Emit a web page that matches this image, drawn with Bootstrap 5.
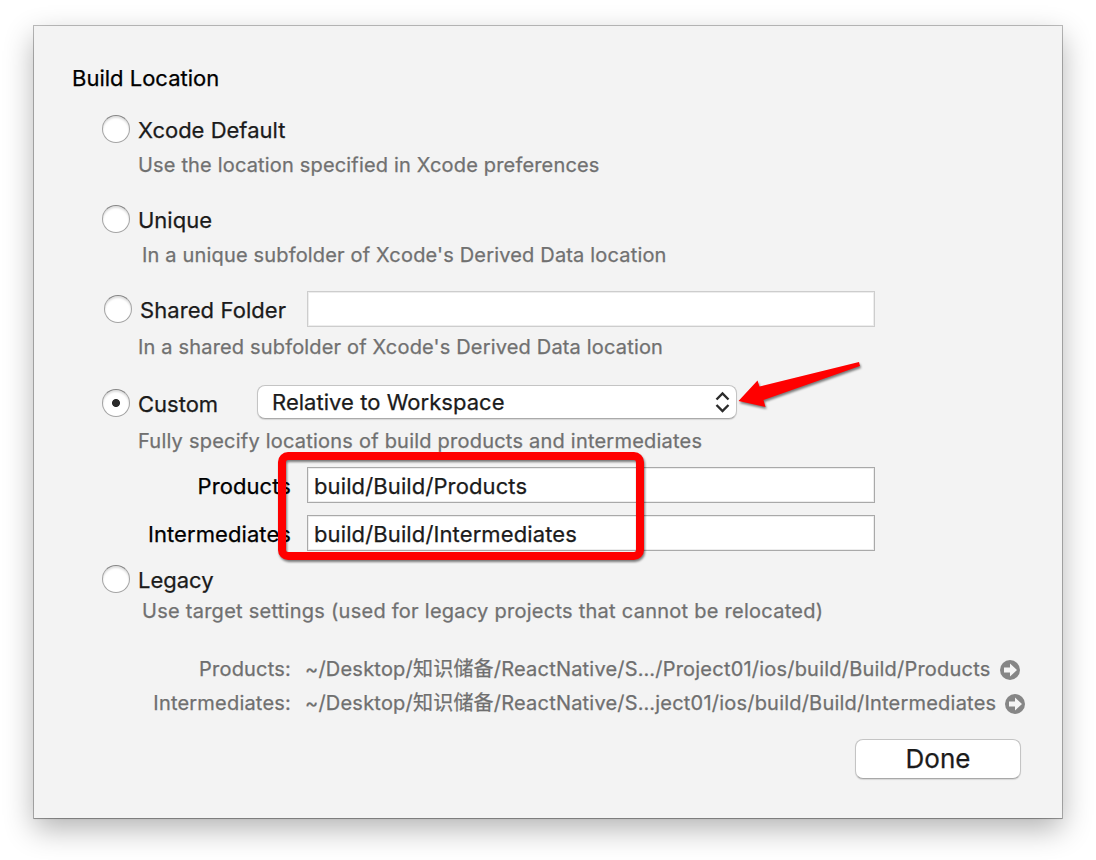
<!DOCTYPE html>
<html lang="en">
<head>
<meta charset="utf-8">
<meta name="viewport" content="width=device-width, initial-scale=1">
<title>Build Location</title>
<link href="https://cdn.jsdelivr.net/npm/bootstrap@5.3.0/dist/css/bootstrap.min.css" rel="stylesheet">
<style>
body{height:860px;padding:26px 0 0 34px;background:#fff;font-family:Inter,"Noto Sans CJK SC",sans-serif;font-size:22px;line-height:30px;color:#1b1b1b;overflow:hidden;white-space:nowrap;-webkit-text-stroke:.25px currentColor}
.sheet{width:1028px;height:792px;padding:35px 0 0 38px;background:#f3f3f3;box-shadow:0 0 0 1px rgba(0,0,0,.25),0 1px 1px rgba(0,0,0,.15),0 11px 28px rgba(0,0,0,.3)}
.heading{height:34px;margin-bottom:17px;font-size:22px;line-height:34px;color:#000}
.opt{height:34px;padding-left:30px}
.opt-label span{padding-top:2px}
.opt-tall{height:36px}
.gap-row{margin-top:22px}
.hint{height:30px;margin-top:4px;padding-left:66px;font-size:20px;letter-spacing:.17px;color:#707070}
.hint-in{padding-left:70px}
.dial{appearance:none;width:28px;height:28px;margin:0 8px 0 0;flex:none;border:1px solid #a4a4a4;border-top-color:#858585;border-radius:50%;background:#fff;box-shadow:inset 0 2px 2px rgba(0,0,0,.13)}
.dial:checked{background:radial-gradient(circle,#2b2b2b 3.6px,#fff 4.4px)}
.field{width:568px;height:36px;padding:1px 6px 0;border:1px solid #a9a9a9;background:#fff;box-shadow:inset 0 0 0 1px #ededed;color:#1b1b1b;letter-spacing:.12px;outline:0}
.field-off{border-color:#cdcdcd}
.picker{width:480px;height:34px;padding:0 6px 0 14px;border:1px solid #c4c4c4;border-bottom-color:#aaa;border-radius:8px;background:#fff;box-shadow:0 1px 1px rgba(0,0,0,.12);color:#1b1b1b;letter-spacing:.04px}
.tag{width:219px;margin-right:16px;padding-top:2px;text-align:right;letter-spacing:.08px;color:#000}
.path{height:30px;font-size:20px;letter-spacing:.21px;color:#6f6f6f}
.path .tag{margin-right:14px;padding-top:0;letter-spacing:.2px;color:inherit}
.path svg{margin:1px 0 0 9px}
.done{width:166px;height:40px;margin:21px 41px 0 auto;padding:0;border:1px solid #c4c4c4;border-bottom-color:#a8a8a8;border-radius:8px;background:#fff;box-shadow:0 1px 1px rgba(0,0,0,.12);font-size:26px;line-height:38px;color:#1b1b1b}
.frame-mark{left:206px;top:-15px;width:366px;height:108px;border:8px solid #f00;border-radius:10px;filter:drop-shadow(1px 2px 1px rgba(0,0,0,.5));pointer-events:none}
.arrow-mark{left:660px;top:-30px;filter:drop-shadow(1px 2px 1px rgba(0,0,0,.5));pointer-events:none}
</style>
</head>
<body>
<main class="sheet">
<h1 class="heading fw-normal">Build Location</h1>

<label class="opt opt-label d-flex align-items-center"><input class="dial" type="radio" name="loc"><span>Xcode Default</span></label>
<div class="hint">Use the location specified in Xcode preferences</div>

<label class="opt opt-label gap-row d-flex align-items-center"><input class="dial" type="radio" name="loc"><span>Unique</span></label>
<div class="hint hint-in">In a unique subfolder of Xcode's Derived Data location</div>

<div class="opt opt-tall d-flex align-items-center" style="margin-top:21px">
  <label class="opt-label d-flex align-items-center" style="width:205px;padding-left:2px;letter-spacing:.08px"><input class="dial" type="radio" name="loc"><span>Shared Folder</span></label>
  <input class="field field-off" type="text" aria-label="Shared folder" disabled>
</div>
<div class="hint" style="margin-top:5px">In a shared subfolder of Xcode's Derived Data location</div>

<div class="opt opt-tall position-relative d-flex" style="margin-top:23px">
  <label class="opt-label d-flex align-items-center" style="width:155px"><input class="dial" type="radio" name="loc" checked><span>Custom</span></label>
  <div class="picker d-flex align-items-center justify-content-between"><span>Relative to Workspace</span>
    <svg width="16" height="22" viewBox="0 0 16 22" fill="none" stroke="#2b2b2b" stroke-width="2.4"><path d="M2.5 8.5 8.5 2.5 14.5 8.5M2.5 14 8.5 20 14.5 14"/></svg>
  </div>
  <svg class="arrow-mark position-absolute" width="140" height="60" viewBox="732 355 140 60"><path fill="#f00" d="M738.5 401 757.5 380.5 759.5 386.5 859 362 860 366 763.5 400 765.5 407Z"/></svg>
</div>
<div class="hint" style="margin-top:5px;letter-spacing:.22px">Fully specify locations of build products and intermediates</div>

<div class="position-relative" style="margin-top:11px">
  <div class="d-flex align-items-center mb-2 pb-1"><label class="tag" for="prod">Products</label><input class="field" id="prod" type="text" value="build/Build/Products"></div>
  <div class="d-flex align-items-center"><label class="tag" for="inter">Intermediates</label><input class="field" id="inter" type="text" value="build/Build/Intermediates"></div>
  <div class="frame-mark position-absolute"></div>
</div>

<label class="opt opt-label d-flex align-items-center" style="margin-top:11px"><input class="dial" type="radio" name="loc"><span>Legacy</span></label>
<div class="hint hint-in" style="margin-top:0;letter-spacing:.26px">Use target settings (used for legacy projects that cannot be relocated)</div>

<div class="path d-flex align-items-center" style="margin-top:28px"><span class="tag">Products:</span><span>~/Desktop/知识储备/ReactNative/S…/Project01/ios/build/Build/Products</span>
  <svg width="20" height="20" viewBox="0 0 20 20"><circle cx="10" cy="10" r="10" fill="#868686"/><path fill="#f5f5f5" d="M4 7.5H10V3.5L17 10 10 16.5V12.5H4Z"/></svg></div>
<div class="path d-flex align-items-center mt-1"><span class="tag">Intermediates:</span><span>~/Desktop/知识储备/ReactNative/S…ject01/ios/build/Build/Intermediates</span>
  <svg width="20" height="20" viewBox="0 0 20 20"><circle cx="10" cy="10" r="10" fill="#868686"/><path fill="#f5f5f5" d="M4 7.5H10V3.5L17 10 10 16.5V12.5H4Z"/></svg></div>

<button class="done d-block" type="button">Done</button>
</main>
<script src="https://cdn.jsdelivr.net/npm/bootstrap@5.3.0/dist/js/bootstrap.bundle.min.js"></script>
</body>
</html>
